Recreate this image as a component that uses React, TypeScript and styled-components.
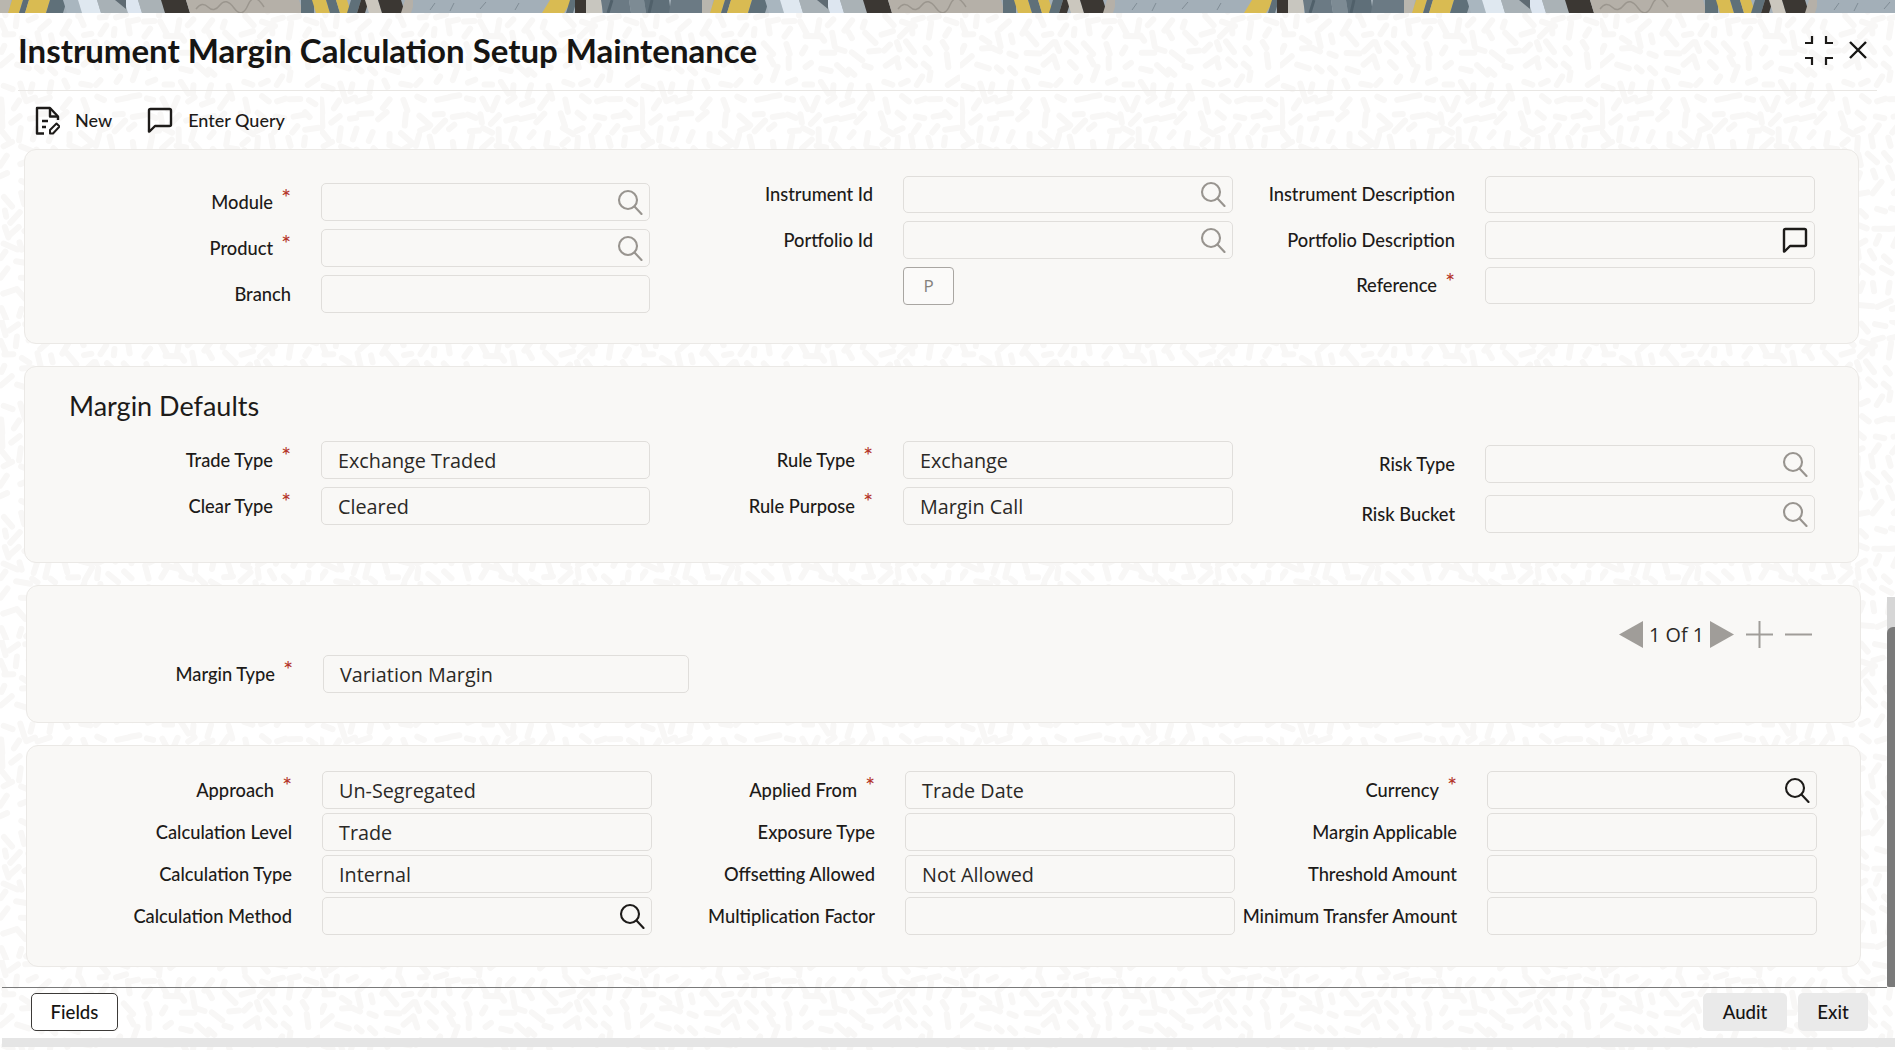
import React from "react";
import styled, { createGlobalStyle } from "styled-components";

// faint squiggle backdrop, generated once so the strokes stay stable
const buildPattern = () => {
  const size = 320;
  const step = 16;
  let seed = 7;
  const rand = () => {
    seed = (seed * 16807) % 2147483647;
    return seed / 2147483647;
  };
  let strokes = "";
  for (let y = 0; y < size; y += step) {
    for (let x = 0; x < size; x += step) {
      const angle =
        Math.sin((x / size) * Math.PI * 4) * 1.5 +
        Math.cos((y / size) * Math.PI * 6) * 1.3 +
        rand() * 0.5;
      const len = 6 + rand() * 9;
      const cx = x + rand() * 6;
      const cy = y + rand() * 6;
      const dx = (Math.cos(angle) * len).toFixed(1);
      const dy = (Math.sin(angle) * len).toFixed(1);
      strokes += `<path d='M${cx.toFixed(1)} ${cy.toFixed(1)}l${dx} ${dy}'/>`;
    }
  }
  const svg = `<svg xmlns='http://www.w3.org/2000/svg' width='${size}' height='${size}'><g stroke='#f8f7f6' stroke-width='6' stroke-linecap='round' fill='none'>${strokes}</g></svg>`;
  return `url("data:image/svg+xml,${encodeURIComponent(svg)}")`;
};

const squiggles = buildPattern();

const GlobalStyle = createGlobalStyle`
  html, body {
    margin: 0;
    padding: 0;
    overflow: hidden;
    background: #fff;
    font-family: "Lato", "Liberation Sans", sans-serif;
  }
  * {
    box-sizing: border-box;
  }
`;

type Band = [number, number, string, number];

// one repeat of the banner, [from, to, colour, slant]
const bands: Band[] = [
  [-4, 10, "#b9b6ae", 1],
  [10, 21, "#d8b94f", 2],
  [21, 27, "#5d6d77", 2],
  [27, 48, "#d9bb52", 2],
  [48, 65, "#5f7079", 2],
  [65, 80, "#a9b6bf", -2],
  [80, 99, "#dfe8f0", -2],
  [99, 126, "#a8b1b6", -2],
  [126, 140, "#dde6f0", -2],
  [140, 163, "#aab2b6", -2],
  [163, 188, "#3b3733", -2],
  [188, 301, "#b5b0a8", -2],
  [301, 314, "#5f7079", 0],
  [314, 328, "#d9bb52", -2],
  [328, 338, "#5f7079", -2],
  [338, 349, "#d9bb52", -2],
  [349, 359, "#5f7079", 2],
  [359, 367, "#3b3733", 2],
  [367, 380, "#cbc7be", -2],
  [380, 403, "#3b3733", -2],
  [403, 413, "#b5b0a8", 2],
  [413, 546, "#a3afb8", 0],
  [546, 568, "#d9bb52", 4],
  [568, 575, "#5f7079", 2],
  [575, 586, "#3b3733", 0],
  [586, 602, "#c8c6bf", 0],
  [602, 630, "#6b7a84", -1],
  [630, 645, "#7d8b94", -1],
  [645, 670, "#5f6f79", -1],
  [670, 712, "#6b7a84", 1],
];

const Page = styled.div`
  position: relative;
  width: 1895px;
  height: 1050px;
  overflow: hidden;
  background-color: #fff;
  background-image: ${squiggles};
`;

const BannerArt = styled.svg`
  display: block;
  width: 100%;
  height: 13px;
`;

const Header = styled.header`
  display: flex;
  align-items: center;
  justify-content: space-between;
  height: 78px;
  margin: 0 18px;
  padding: 0 10px 3px 0;
  border-bottom: 1px solid #e9e7e4;
`;

const Title = styled.h1`
  margin: 0;
  font-size: 33px;
  font-weight: 700;
  color: #161513;
  white-space: nowrap;
`;

const WindowActions = styled.div`
  display: flex;
  align-items: center;
  gap: 16px;
`;

const Toolbar = styled.div`
  display: flex;
  align-items: center;
  height: 58px;
  padding-left: 35px;
  gap: 35px;
`;

const ToolButton = styled.div`
  display: flex;
  align-items: center;
  gap: 15px;
  font-size: 18px;
  font-weight: 500;
  color: #1d1b19;
`;

const Panels = styled.main`
  display: flex;
  flex-direction: column;
  gap: 22px;
`;

const Panel = styled.section<{ $left: number; $height: number; $top: number }>`
  width: 1835px;
  height: ${(p) => p.$height}px;
  margin-left: ${(p) => p.$left}px;
  padding-top: ${(p) => p.$top}px;
  background: #f9f8f6;
  border: 1px solid #ebe9e6;
  border-radius: 12px;
`;

const PanelHeading = styled.h2`
  margin: 0 0 18px 44px;
  height: 32px;
  line-height: 30px;
  font-size: 27px;
  font-weight: 400;
  color: #1d1b19;
`;

const FormGrid = styled.div<{ $columns: string }>`
  display: grid;
  grid-template-columns: ${(p) => p.$columns};
`;

const Column = styled.div<{ $top?: number; $gap: number }>`
  display: flex;
  flex-direction: column;
  gap: ${(p) => p.$gap}px;
  padding-top: ${(p) => p.$top ?? 0}px;
`;

const Row = styled.div`
  display: flex;
  align-items: center;
  justify-content: flex-end;
  gap: 30px;
`;

const FieldLabel = styled.label`
  display: flex;
  align-items: center;
  font-size: 18.3px;
  font-weight: 500;
  color: #1d1b19;
  white-space: nowrap;
`;

const Star = styled.span`
  width: 18px;
  height: 24px;
  margin-top: -9px;
  text-align: right;
  font-size: 23px;
  line-height: 24px;
  color: #b5372b;
`;

const Input = styled.div<{ $width: number }>`
  display: flex;
  align-items: center;
  justify-content: space-between;
  width: ${(p) => p.$width}px;
  height: 37.5px;
  padding: 0 6px 0 16px;
  background: #f9f8f6;
  border: 1px solid #e0dedb;
  border-radius: 5px;
`;

const Value = styled.span`
  padding-top: 1px;
  font-family: "Open Sans", "Noto Sans", sans-serif;
  font-size: 19.8px;
  color: #2b2926;
  white-space: nowrap;
`;

const PickButton = styled.button`
  align-self: flex-start;
  width: 51px;
  height: 38px;
  margin-left: 253px;
  padding: 0;
  background: #fbfaf9;
  border: 1px solid #a9a6a2;
  border-radius: 4px;
  font-family: "Open Sans", sans-serif;
  font-size: 17px;
  color: #85817d;
`;

const PagerRow = styled.div`
  display: flex;
  align-items: center;
  justify-content: flex-end;
  height: 27px;
  margin: 0 48px 7px 0;
`;

const PagerText = styled.span`
  margin: 0 6px 0 6px;
  font-family: "Open Sans", sans-serif;
  font-size: 19.8px;
  color: #2b2926;
  white-space: nowrap;
`;

const PagerIcon = styled.svg<{ $space?: number }>`
  display: block;
  margin-left: ${(p) => p.$space ?? 0}px;
`;

const Footer = styled.footer`
  display: flex;
  align-items: flex-start;
  justify-content: space-between;
  width: 1885px;
  height: 51px;
  margin: 20px 0 0 2px;
  padding: 5px 19px 0 29px;
  border-top: 1px solid #7a7a7a;
`;

const FooterGroup = styled.div`
  display: flex;
  gap: 11px;
`;

const FieldsButton = styled.button`
  width: 87px;
  height: 38px;
  padding: 0;
  background: #fff;
  border: 1px solid #3c3a38;
  border-radius: 5px;
  font-family: "Lato", sans-serif;
  font-size: 18.6px;
  font-weight: 500;
  color: #161513;
`;

const GreyButton = styled.button<{ $width: number }>`
  width: ${(p) => p.$width}px;
  height: 38px;
  padding: 0;
  background: #eaeaea;
  border: 0;
  border-radius: 5px;
  font-family: "Lato", sans-serif;
  font-size: 18.6px;
  font-weight: 500;
  color: #161513;
`;

const BottomBar = styled.div`
  height: 9px;
  margin-left: 2px;
  background: #e5e5e5;
`;

const ScrollTrack = styled.div`
  position: absolute;
  top: 597px;
  right: 0;
  width: 8px;
  height: 390px;
  padding-top: 30px;
  background: #d6d6d6;
`;

const ScrollThumb = styled.div`
  height: 100%;
  background: #7a7a7a;
  border-radius: 6px 0 0 2px;
`;

const SearchIcon = ({ color }: { color: string }) => (
  <svg width="26" height="26" viewBox="0 0 26 26" fill="none" stroke={color} strokeWidth="2.1">
    <circle cx="11" cy="11" r="9" />
    <path d="M17.5 17.5 24.5 25" strokeLinecap="round" />
  </svg>
);

const ChatIcon = ({ size = 26 }: { size?: number }) => (
  <svg width={size} height={size} viewBox="0 0 26 26" fill="none" stroke="#1d1b19" strokeWidth="2.4">
    <path d="M2 3.5Q2 2 3.5 2H22.5Q24 2 24 3.5V17.5Q24 19 22.5 19H8L2.5 24.5H2Z" strokeLinejoin="round" />
  </svg>
);

const NewIcon = () => (
  <svg width="25" height="29" viewBox="0 0 25 29" fill="none" stroke="#1d1b19" strokeWidth="2.4">
    <path d="M9 27.5H2V2H15L23 10.5V14" strokeLinejoin="round" />
    <path d="M15 2V10.5H23" strokeLinejoin="round" />
    <path d="M7 15H13M7 21H11" />
    <path d="M15 27.5V24L21.5 17.5 24.5 20.5 18 27.5Z" strokeLinejoin="round" strokeWidth="2" />
  </svg>
);

const ExpandIcon = () => (
  <svg width="28" height="29" viewBox="0 0 28 29" fill="none" stroke="#1d1b19" strokeWidth="2.2">
    <path d="M0 7H7V0M21 0V7H28M0 22H7V29M28 22H21V29" />
  </svg>
);

const CloseIcon = () => (
  <svg width="18" height="18" viewBox="0 0 18 18" fill="none" stroke="#161513" strokeWidth="2.4">
    <path d="M1 1 17 17M17 1 1 17" />
  </svg>
);

type FieldProps = {
  label: string;
  required?: boolean;
  value?: string;
  width?: number;
  icon?: "search" | "searchDark" | "chat";
};

const Field = ({ label, required, value, width = 330, icon }: FieldProps) => (
  <Row>
    <FieldLabel>
      {label}
      {required && <Star>*</Star>}
    </FieldLabel>
    <Input $width={width}>
      <Value>{value}</Value>
      {icon === "search" && <SearchIcon color="#98948f" />}
      {icon === "searchDark" && <SearchIcon color="#1d1b19" />}
      {icon === "chat" && <ChatIcon />}
    </Input>
  </Row>
);

function Banner() {
  return (
    <BannerArt viewBox="0 0 1895 13" preserveAspectRatio="none">
      <defs>
        <pattern id="band" width="702" height="13" patternUnits="userSpaceOnUse">
          <rect width="702" height="13" fill="#a3afb8" />
          {bands.map(([from, to, colour, slant]) => (
            <polygon
              key={from}
              points={`${from + slant},0 ${to + slant},0 ${to - slant},13 ${from - slant},13`}
              fill={colour}
            />
          ))}
          <polygon points="115,0 126,0 126,9" fill="#5f6b73" />
          <path d="M196 9q6-8 12-2t12-2 14 3 14-3 16 2" fill="none" stroke="#9b968e" strokeWidth="1.5" />
          <path d="M430 10l5-7M450 11l4-8M480 9l6-7M515 10l4-7" stroke="#7f8c95" strokeWidth="1" />
          <path d="M612 0l-4 13M652 0l-3 13" stroke="#50606a" strokeWidth="3" />
        </pattern>
      </defs>
      <rect width="1895" height="13" fill="url(#band)" />
    </BannerArt>
  );
}

function App() {
  return (
    <Page>
      <GlobalStyle />
      <Banner />
      <Header>
        <Title>Instrument Margin Calculation Setup Maintenance</Title>
        <WindowActions>
          <ExpandIcon />
          <CloseIcon />
        </WindowActions>
      </Header>
      <Toolbar>
        <ToolButton>
          <NewIcon />
          New
        </ToolButton>
        <ToolButton>
          <ChatIcon />
          Enter Query
        </ToolButton>
      </Toolbar>

      <Panels>
        <Panel $left={24} $height={195} $top={25.5}>
          <FormGrid $columns="625px 583px 582px">
            <Column $top={7.5} $gap={8.5}>
              <Field label="Module" required icon="search" width={329} />
              <Field label="Product" required icon="search" width={329} />
              <Field label="Branch" width={329} />
            </Column>
            <Column $gap={8}>
              <Field label="Instrument Id" icon="search" />
              <Field label="Portfolio Id" icon="search" />
              <PickButton>P</PickButton>
            </Column>
            <Column $gap={8}>
              <Field label="Instrument Description" />
              <Field label="Portfolio Description" icon="chat" />
              <Field label="Reference" required />
            </Column>
          </FormGrid>
        </Panel>

        <Panel $left={24} $height={197} $top={24}>
          <PanelHeading>Margin Defaults</PanelHeading>
          <FormGrid $columns="625px 583px 582px">
            <Column $gap={8.5}>
              <Field label="Trade Type" required value="Exchange Traded" width={329} />
              <Field label="Clear Type" required value="Cleared" width={329} />
            </Column>
            <Column $gap={8.5}>
              <Field label="Rule Type" required value="Exchange" />
              <Field label="Rule Purpose" required value="Margin Call" />
            </Column>
            <Column $top={4} $gap={12.5}>
              <Field label="Risk Type" icon="search" />
              <Field label="Risk Bucket" icon="search" />
            </Column>
          </FormGrid>
        </Panel>

        <Panel $left={26} $height={138} $top={35}>
          <PagerRow>
            <PagerIcon width="24" height="27" viewBox="0 0 24 27">
              <polygon points="0,13.5 24,0 24,27" fill="#a09d99" />
            </PagerIcon>
            <PagerText>1 Of 1</PagerText>
            <PagerIcon width="24" height="27" viewBox="0 0 24 27">
              <polygon points="0,0 24,13.5 0,27" fill="#a09d99" />
            </PagerIcon>
            <PagerIcon $space={12} width="27" height="27" viewBox="0 0 27 27">
              <path d="M0 13.5H27M13.5 0V27" stroke="#a09d99" strokeWidth="2" />
            </PagerIcon>
            <PagerIcon $space={12} width="27" height="27" viewBox="0 0 27 27">
              <path d="M0 13.5H27" stroke="#a09d99" strokeWidth="2" />
            </PagerIcon>
          </PagerRow>
          <FormGrid $columns="662px">
            <Column $gap={0}>
              <Field label="Margin Type" required value="Variation Margin" width={366} />
            </Column>
          </FormGrid>
        </Panel>

        <Panel $left={26} $height={222} $top={25}>
          <FormGrid $columns="625px 583px 582px">
            <Column $gap={4.5}>
              <Field label="Approach" required value="Un-Segregated" />
              <Field label="Calculation Level" value="Trade" />
              <Field label="Calculation Type" value="Internal" />
              <Field label="Calculation Method" icon="searchDark" />
            </Column>
            <Column $gap={4.5}>
              <Field label="Applied From" required value="Trade Date" />
              <Field label="Exposure Type" />
              <Field label="Offsetting Allowed" value="Not Allowed" />
              <Field label="Multiplication Factor" />
            </Column>
            <Column $gap={4.5}>
              <Field label="Currency" required icon="searchDark" />
              <Field label="Margin Applicable" />
              <Field label="Threshold Amount" />
              <Field label="Minimum Transfer Amount" />
            </Column>
          </FormGrid>
        </Panel>
      </Panels>

      <Footer>
        <FieldsButton>Fields</FieldsButton>
        <FooterGroup>
          <GreyButton $width={84}>Audit</GreyButton>
          <GreyButton $width={70}>Exit</GreyButton>
        </FooterGroup>
      </Footer>
      <BottomBar />

      <ScrollTrack>
        <ScrollThumb />
      </ScrollTrack>
    </Page>
  );
}

export default App;
